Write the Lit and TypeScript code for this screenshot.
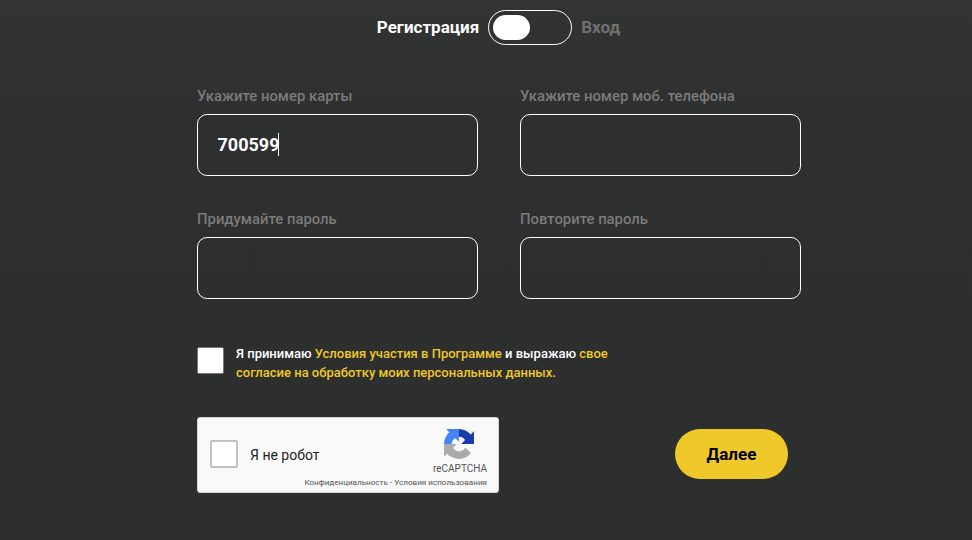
import { LitElement, html, css } from "lit";
import { customElement } from "lit/decorators.js";

@customElement("app-root")
export class AppRoot extends LitElement {
  static styles = css`
    :host { display: block; width: 972px; height: 540px; overflow: hidden; background: linear-gradient(#323333, #2e2f2f 25%, #2d2e2e); font-family: Roboto, "Liberation Sans", sans-serif; box-sizing: border-box; padding-top: 10px; }
    .switch { display: flex; justify-content: center; align-items: center; height: 35px; padding-left: 25px; }
    .reg { font-size: 17px; font-weight: 700; color: #fff; margin: -2px 9px 0 0; }
    .track { width: 84px; height: 35px; box-sizing: border-box; border: 1px solid #fff; border-radius: 18px; padding: 4px; margin-right: 9px; }
    .knob { width: 37px; height: 25px; background: #fff; border-radius: 13px; }
    .login { font-size: 17px; font-weight: 700; color: #707171; margin-top: -2px; }
    .form { width: 604px; margin: 0 0 0 197px; }
    .grid { display: grid; grid-template-columns: 281px 281px; column-gap: 42px; row-gap: 34px; margin-top: 42px; }
    label { display: block; font-size: 14.85px; font-weight: 500; line-height: 18px; height: 18px; color: #7a7b7b; margin-bottom: 9px; }
    .input { height: 62px; box-sizing: border-box; border: 1px solid #fff; border-radius: 10px; padding: 0 0 2px 19.5px; display: flex; align-items: center; font-size: 18px; font-weight: 700; color: #fff; }
    .caret { width: 1px; height: 23px; background: #fff; margin-left: -1px; }
    .agree { display: flex; margin-top: 48px; }
    .box { width: 27px; height: 27px; box-sizing: border-box; background: #fff; border: 1px solid #777; border-radius: 2px; flex: none; }
    .agree p { margin: -3px 0 0 12px; width: 380px; font-size: 13px; font-weight: 500; line-height: 19px; color: #fff; }
    .agree a { color: #efc829; }
    .bottom { display: flex; margin-top: 35px; align-items: center; }
    .captcha { width: 302px; height: 76px; box-sizing: border-box; background: #f9f9f9; border: 1px solid #d3d3d3; border-radius: 3px; display: flex; flex: none; }
    .cb { width: 28px; height: 28px; box-sizing: border-box; background: #fff; border: 2px solid #c1c1c1; border-radius: 2px; margin: 22px 12px 0 12px; flex: none; }
    .nr { font-size: 14px; color: #222; margin-top: 29px; line-height: 17px; flex: 0 0 50px; min-width: 0; white-space: nowrap; }
    .brand { flex: 1; min-width: 0; display: flex; flex-direction: column; align-items: flex-end; padding: 11px 11px 0 0; }
    .brand svg { display: block; margin-right: 13px; }
    .rc { font-size: 10px; line-height: 12px; color: #555; margin: 4px 0 0; }
    .terms { font-size: 8.1px; line-height: 10px; font-weight: 400; color: #555; margin-top: 2px; white-space: nowrap; }
    .next { margin: 0 0 2px 176px; width: 113px; height: 50px; border-radius: 25px; background: #efc829; color: #000; font-size: 17px; font-weight: 700; display: flex; align-items: center; justify-content: center; flex: none; }
  `;

  render() {
    return html`
      <div class="switch">
        <span class="reg">Регистрация</span>
        <div class="track"><div class="knob"></div></div>
        <span class="login">Вход</span>
      </div>
      <div class="form">
        <div class="grid">
          <div><label>Укажите номер карты</label><div class="input">700599<span class="caret"></span></div></div>
          <div><label>Укажите номер моб. телефона</label><div class="input"></div></div>
          <div><label>Придумайте пароль</label><div class="input"></div></div>
          <div><label>Повторите пароль</label><div class="input"></div></div>
        </div>
        <div class="agree">
          <div class="box"></div>
          <p><span>Я принимаю</span> <a>Условия участия в Программе</a> <span>и выражаю</span> <a>свое</a> <a>согласие на обработку моих персональных данных.</a></p>
        </div>
        <div class="bottom">
          <div class="captcha">
            <div class="cb"></div>
            <div class="nr">Я не робот</div>
            <div class="brand">
              <svg width="30" height="30" viewBox="0 0 64 64">
                <path fill="#1c3aa9" d="M64 31.955l-.033-1.37V4.687l-7.16 7.16C50.948 4.674 42.033.093 32.05.093c-10.4 0-19.622 4.96-25.458 12.64l11.736 11.86a15.55 15.55 0 0 1 4.754-5.334c2.05-1.6 4.952-2.906 8.968-2.906.485 0 .86.057 1.135.163 4.976.393 9.29 3.14 11.83 7.124l-8.307 8.307c10.522-.04 22.4-.066 27.295.005"/>
                <path fill="#4285f4" d="M31.862.094l-1.37.033H4.594l7.16 7.16C4.58 13.147 0 22.06 0 32.046c0 10.4 4.96 19.622 12.64 25.458l11.86-11.736a15.55 15.55 0 0 1-5.334-4.754c-1.6-2.05-2.906-4.952-2.906-8.968 0-.485.057-.86.163-1.135.393-4.976 3.14-9.29 7.124-11.83l8.307 8.307c-.04-10.522-.066-22.4.005-27.295"/>
                <path fill="#ababab" d="M.001 32.045l.033 1.37v25.898l7.16-7.16c5.86 7.173 14.774 11.754 24.76 11.754 10.4 0 19.622-4.96 25.458-12.64l-11.736-11.86a15.55 15.55 0 0 1-4.754 5.334c-2.05 1.6-4.952 2.906-8.968 2.906-.485 0-.86-.057-1.135-.163-4.976-.393-9.29-3.14-11.83-7.124l8.307-8.307c-10.522.04-22.4.066-27.295-.005"/>
              </svg>
              <div class="rc">reCAPTCHA</div>
              <div class="terms">Конфиденциальность - Условия использования</div>
            </div>
          </div>
          <div class="next">Далее</div>
        </div>
      </div>
    `;
  }
}
